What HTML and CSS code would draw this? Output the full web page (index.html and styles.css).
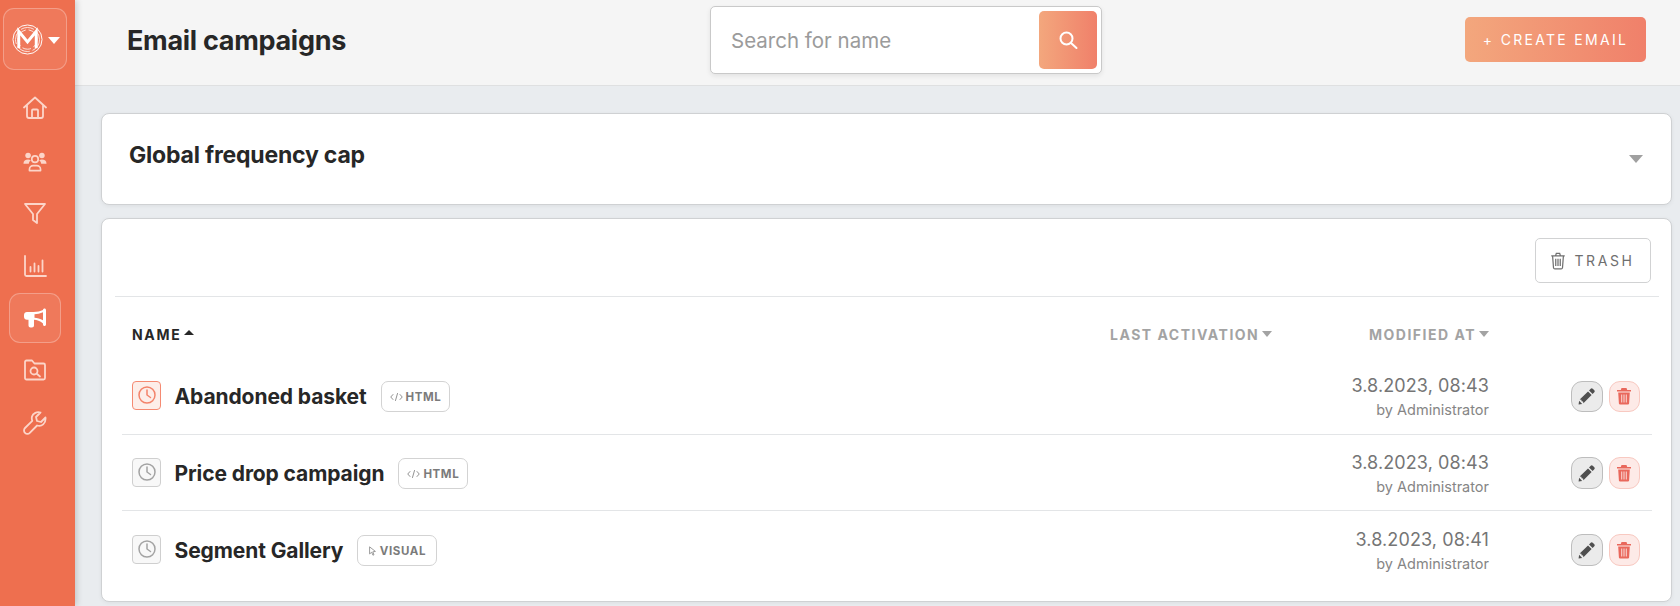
FILE: index.html
```html
<!DOCTYPE html>
<html lang="en">
<head>
<meta charset="utf-8">
<title>Email campaigns</title>
<link rel="stylesheet" href="styles.css">
</head>
<body>
<div class="app">
  <aside class="sidebar">
    <div class="brand">
      <svg class="brand-logo" viewBox="0 0 32 32" fill="none" stroke="#fff">
        <circle cx="16" cy="16" r="15" stroke-width="1"/>
        <circle cx="16" cy="16" r="12.4" stroke-width=".8" stroke-dasharray="14 3"/>
        <circle cx="16" cy="16" r="10" stroke-width=".8" stroke-dasharray="9 3"/>
        <path d="M7 25V7.500L16 18.500 25 7.500V25" stroke-width="3" stroke-linejoin="miter"/>
      </svg>
      <span class="caret caret-white"></span>
    </div>
    <nav class="nav">
      <a class="nav-item"><svg viewBox="0 0 24 24"><path d="M1 11.500 12 1.500l11 10M4 9.500V20a2 2 0 0 0 2 2h12a2 2 0 0 0 2-2V9.500M9 22v-7.500a1 1 0 0 1 1-1h4a1 1 0 0 1 1 1V22"/></svg></a>
      <a class="nav-item"><svg viewBox="0 0 26 24"><circle cx="5.500" cy="6" r="3" class="fill"/><circle cx="20.500" cy="6" r="3" class="fill"/><path class="fill" d="M.5 15c0-3 2-4.500 5-4.500 1.200 0 2 .2 3 .8-1.300 1-2 2.200-2.200 3.700zM25.500 15c0-3-2-4.500-5-4.500-1.200 0-2 .2-3 .8 1.300 1 2 2.200 2.200 3.700z"/><circle cx="13" cy="10" r="3.500"/><path d="M7 22.500v-1.500c0-2.500 2-4 4-4h4c2 0 4 1.500 4 4v1.500z"/></svg></a>
      <a class="nav-item"><svg viewBox="0 0 24 24"><path d="M2 3h20l-8 10v9l-4-3v-6z"/></svg></a>
      <a class="nav-item"><svg viewBox="0 0 24 24"><path d="M2 2v18.500a1.500 1.500 0 0 0 1.500 1.500H23M7.500 13v4.500M11.500 9.500v8M15.500 12v5.500M19.500 6.500v11"/></svg></a>
      <a class="nav-item nav-active"><svg viewBox="0 0 24 24"><path class="solid" d="M21.500 2.500c.8 0 1.500.7 1.500 1.500v14.500c0 .8-.7 1.500-1.500 1.500s-1.500-.7-1.500-1.500v-1C17 15 14 14 11 13.800v5.700c0 1.100-.9 2-2 2H7.500c-1.100 0-2-.9-2-2v-5.800H4c-1.700 0-3-1.300-3-3V9c0-1.700 1.300-3 3-3h6.500C14 6 17.500 5.200 20 4v-.1c.1-.8.700-1.400 1.500-1.400zM11.500 8.200v3.600c2.700.2 5.700 1 8.500 2.400V6.300c-2.800 1.300-5.800 1.800-8.500 1.900z"/></svg></a>
      <a class="nav-item"><svg viewBox="0 0 24 24"><path d="M2 6V4a1.500 1.500 0 0 1 1.500-1.500H9l2.500 3h9A1.500 1.500 0 0 1 22 7v13a1.500 1.500 0 0 1-1.500 1.500h-17A1.500 1.500 0 0 1 2 20z"/><circle cx="11" cy="13" r="3.500"/><path d="m13.500 15.500 3.500 3"/></svg></a>
      <a class="nav-item"><svg viewBox="0 0 24 24"><path d="M22.500 6.500 18 11l-4-1-1-4 4.500-4.500C14 .5 10 2 9 5.500c-.4 1.500-.2 3 .3 4.300L2 17c-1.300 1.300-1.300 3.500 0 4.800s3.500 1.300 4.800 0l7.300-7.300c4.400 1.500 9-1.700 8.400-8z"/></svg></a>
    </nav>
  </aside>

  <main class="main">
    <header class="topbar">
      <h1 class="page-title">Email campaigns</h1>
      <div class="search">
        <span class="search-input">Search for name</span>
        <button class="search-btn" type="button"><svg viewBox="0 0 20 20"><circle cx="8.500" cy="8.500" r="6"/><path d="m13 13 5.500 5"/></svg></button>
      </div>
      <button class="create-btn" type="button">+ CREATE EMAIL</button>
    </header>

    <div class="content">
      <section class="card cap-card">
        <h2 class="cap-title">Global frequency cap</h2>
        <span class="caret caret-grey"></span>
      </section>

      <section class="card list-card">
        <div class="toolbar">
          <button class="trash-btn" type="button">
            <svg viewBox="0 0 14 16"><path d="M1 3.500h12M2.200 3.500 3 14a1.200 1.200 0 0 0 1.200 1h5.600a1.200 1.200 0 0 0 1.200-1l.8-10.500M4.800 3.500 5.500 1.200h3l.7 2.300M5 6v6.500M7 6v6.500M9 6v6.500"/></svg>
            TRASH
          </button>
        </div>

        <div class="thead">
          <span class="th th-name">NAME<span class="caret-up"></span></span>
          <span class="th th-activation">LAST ACTIVATION<span class="caret-down"></span></span>
          <span class="th th-modified">MODIFIED AT<span class="caret-down"></span></span>
        </div>

        <div class="row">
          <span class="status status-on"><svg viewBox="0 0 20 20"><circle cx="10" cy="10" r="8"/><path d="M10 5v5l3.500 2.500"/></svg></span>
          <span class="name">Abandoned basket</span>
          <span class="badge"><svg class="badge-code" viewBox="0 0 14 10"><path d="M3.500 2 .8 5l2.700 3M10.500 2l2.700 3-2.700 3M8.200 .8 5.800 9.200"/></svg>HTML</span>
          <div class="modified"><div class="date">3.8.2023, 08:43</div><div class="by">by Administrator</div></div>
          <div class="actions">
            <button class="act act-edit" type="button"><svg viewBox="0 0 16 16"><path d="M11.300 1.500a1.300 1.300 0 0 1 1.800 0l1.400 1.400a1.300 1.300 0 0 1 0 1.800l-1.500 1.500-3.200-3.200zM8.900 3.900l3.200 3.200-7.300 7.300-.3-1.600-1.300-.2-.2-1.300-1.500-.3zM1 12.300l2.700 2.700-3.200.6z"/></svg></button>
            <button class="act act-del" type="button"><svg viewBox="0 0 16 18"><path d="M1 3h14v1.500H1zM5.500 1h5l.7 2h-6.400zM2.200 5.500h11.600l-.7 11a1.200 1.200 0 0 1-1.200 1.100H4.100a1.200 1.200 0 0 1-1.200-1.100zM5.300 7.500v8h.9v-8zM7.550 7.500v8h.9v-8zM9.800 7.500v8h.9v-8z" fill-rule="evenodd"/></svg></button>
          </div>
        </div>

        <div class="row">
          <span class="status"><svg viewBox="0 0 20 20"><circle cx="10" cy="10" r="8"/><path d="M10 5v5l3.500 2.500"/></svg></span>
          <span class="name">Price drop campaign</span>
          <span class="badge"><svg class="badge-code" viewBox="0 0 14 10"><path d="M3.500 2 .8 5l2.700 3M10.500 2l2.700 3-2.700 3M8.200 .8 5.800 9.200"/></svg>HTML</span>
          <div class="modified"><div class="date">3.8.2023, 08:43</div><div class="by">by Administrator</div></div>
          <div class="actions">
            <button class="act act-edit" type="button"><svg viewBox="0 0 16 16"><path d="M11.300 1.500a1.300 1.300 0 0 1 1.800 0l1.400 1.400a1.300 1.300 0 0 1 0 1.800l-1.500 1.500-3.200-3.200zM8.900 3.900l3.200 3.200-7.300 7.300-.3-1.600-1.300-.2-.2-1.300-1.500-.3zM1 12.300l2.700 2.700-3.200.6z"/></svg></button>
            <button class="act act-del" type="button"><svg viewBox="0 0 16 18"><path d="M1 3h14v1.500H1zM5.500 1h5l.7 2h-6.400zM2.200 5.500h11.600l-.7 11a1.200 1.200 0 0 1-1.200 1.100H4.100a1.200 1.200 0 0 1-1.200-1.100zM5.300 7.500v8h.9v-8zM7.550 7.500v8h.9v-8zM9.800 7.500v8h.9v-8z" fill-rule="evenodd"/></svg></button>
          </div>
        </div>

        <div class="row row-last">
          <span class="status"><svg viewBox="0 0 20 20"><circle cx="10" cy="10" r="8"/><path d="M10 5v5l3.500 2.500"/></svg></span>
          <span class="name">Segment Gallery</span>
          <span class="badge badge-visual"><svg class="badge-cursor" viewBox="0 0 10 12"><path d="M1.500 1 8.500 6.500 5.300 7 6.800 10.500 5.500 11 4 7.500 1.500 9.500z"/></svg>VISUAL</span>
          <div class="modified"><div class="date">3.8.2023, 08:41</div><div class="by">by Administrator</div></div>
          <div class="actions">
            <button class="act act-edit" type="button"><svg viewBox="0 0 16 16"><path d="M11.300 1.500a1.300 1.300 0 0 1 1.800 0l1.400 1.400a1.300 1.300 0 0 1 0 1.800l-1.500 1.500-3.200-3.200zM8.900 3.900l3.200 3.200-7.300 7.300-.3-1.600-1.300-.2-.2-1.300-1.500-.3zM1 12.300l2.700 2.700-3.200.6z"/></svg></button>
            <button class="act act-del" type="button"><svg viewBox="0 0 16 18"><path d="M1 3h14v1.500H1zM5.500 1h5l.7 2h-6.400zM2.200 5.500h11.600l-.7 11a1.200 1.200 0 0 1-1.200 1.100H4.100a1.200 1.200 0 0 1-1.200-1.100zM5.300 7.500v8h.9v-8zM7.550 7.500v8h.9v-8zM9.800 7.500v8h.9v-8z" fill-rule="evenodd"/></svg></button>
          </div>
        </div>
      </section>
    </div>
  </main>
</div>
</body>
</html>
```

FILE: styles.css
```css
* { box-sizing: border-box; }
html, body { margin: 0; height: 100%; }
body {
  font-family: Inter, "Liberation Sans", sans-serif;
  background: #e9ecef;
  color: #272727;
  overflow: hidden;
}
button { font-family: inherit; cursor: pointer; }
h1, h2 { margin: 0; }

.app { display: flex; height: 606px; }

/* Sidebar */
.sidebar {
  width: 75px;
  flex: none;
  background: #ee6f4f;
  box-shadow: 2px 0 6px rgba(0, 0, 0, .16);
  padding: 8px 8px 0 3px;
  position: relative;
  z-index: 1;
}
.brand {
  width: 64px;
  height: 62px;
  border: 1px solid rgba(255, 255, 255, .28);
  border-radius: 11px;
  background: rgba(255, 255, 255, .07);
  display: flex;
  align-items: center;
  padding-left: 8px;
  padding-top: 1px;
}
.brand-logo { width: 31px; height: 31px; flex: none; }
.caret { display: block; width: 0; height: 0; border-style: solid; border-color: transparent; }
.caret-white { border-width: 7px 6px 0; border-top-color: #fff; margin-left: 5px; margin-top: 1px; }

.nav { display: flex; flex-direction: column; align-items: center; margin: 12px 0 0 6px; width: 52px; }
.nav-item {
  width: 52px;
  height: 52.500px;
  display: flex;
  align-items: center;
  justify-content: center;
}
.nav-item svg {
  width: 24px;
  height: 24px;
  fill: none;
  stroke: #fcd5c9;
  stroke-width: 1.800;
  stroke-linecap: round;
  stroke-linejoin: round;
}
.nav-item .fill { fill: #fcd5c9; stroke: none; }
.nav-item .solid { fill: #fff; stroke: none; }
.nav-active {
  height: 50px;
  margin: 1px 0;
  border: 1px solid rgba(255, 255, 255, .28);
  border-radius: 11px;
  background: rgba(255, 255, 255, .07);
}

/* Main */
.main { flex: 1; min-width: 0; display: flex; flex-direction: column; }
.topbar {
  height: 86px;
  flex: none;
  background: #f5f5f5;
  border-bottom: 1px solid #dfe0e1;
  display: grid;
  grid-template-columns: 582px 393px 1fr;
  align-items: start;
  padding: 0 34px 0 52px;
}
.page-title {
  font-size: 27px;
  font-weight: 700;
  line-height: 34px;
  letter-spacing: -.3px;
  margin-top: 24px;
  color: #272727;
}
.search {
  height: 68px;
  margin: 6px 0 0 1px;
  background: #fff;
  border: 1px solid #c9c9c9;
  border-radius: 5px;
  box-shadow: 0 2px 5px rgba(0, 0, 0, .08);
  display: flex;
  align-items: center;
  justify-content: space-between;
  padding: 0 4px 0 20px;
}
.search-input { font-size: 20.500px; color: #9b9b9b; }
.search-btn {
  width: 58px;
  height: 58px;
  border: 0;
  border-radius: 5px;
  background: linear-gradient(90deg, #f3a77d, #f0806a);
  display: flex;
  align-items: center;
  justify-content: center;
  padding: 0;
}
.search-btn svg { width: 20px; height: 20px; fill: none; stroke: #fff; stroke-width: 2; stroke-linecap: round; }
.create-btn {
  justify-self: end;
  width: 181px;
  height: 45px;
  margin-top: 17px;
  border: 0;
  border-radius: 5px;
  background: linear-gradient(90deg, #f3a77d, #f0806a);
  color: #fff;
  font-size: 14px;
  font-weight: 400;
  letter-spacing: 2.300px;
  padding: 0;
}

.content {
  flex: 1;
  padding: 27px 8px 0 26px;
  display: flex;
  flex-direction: column;
  gap: 13px;
}
.card {
  background: #fff;
  border: 1px solid #cfd1d3;
  border-radius: 8px;
  box-shadow: 0 1px 4px rgba(0, 0, 0, .06);
}

.cap-card {
  height: 92px;
  display: flex;
  justify-content: space-between;
  padding: 25px 28px 0 27px;
}
.cap-title { font-size: 23px; font-weight: 700; line-height: 32px; letter-spacing: -.2px; color: #272727; }
.caret-grey { border-width: 8px 7px 0; border-top-color: #a0a0a0; margin-top: 16px; }

.list-card { height: 384px; padding: 19px 0 0 13px; }
.toolbar {
  width: 1544px;
  height: 59px;
  border-bottom: 1px solid #e3e5e7;
  display: flex;
  justify-content: flex-end;
  padding-right: 8px;
}
.trash-btn {
  width: 116px;
  height: 45px;
  background: #fff;
  border: 1px solid #d1d2d3;
  border-radius: 5px;
  color: #6f6f6f;
  font-size: 14px;
  letter-spacing: 2.600px;
  display: flex;
  align-items: center;
  justify-content: center;
  gap: 8px;
  padding: 0 1px 0 0;
}
.trash-btn svg { width: 16px; height: 18px; fill: none; stroke: #6f6f6f; stroke-width: 1.100; }

.thead {
  height: 61px;
  width: 1536px;
  margin-left: 7px;
  display: flex;
  align-items: center;
  padding: 13px 0 0 10px;
  font-size: 14px;
  font-weight: 700;
  letter-spacing: 1.500px;
  color: #a3a3a3;
}
.th { display: flex; align-items: center; white-space: nowrap; }
.th-name { color: #272727; width: 978px; letter-spacing: 1.700px; }
.th-activation { width: 259px; }
.caret-up, .caret-down { display: block; width: 0; height: 0; border-style: solid; border-color: transparent; margin-left: 3px; }
.caret-up { border-width: 0 5px 5px; border-bottom-color: #272727; margin-bottom: 3px; }
.caret-down { border-width: 6px 5.500px 0; border-top-color: #a3a3a3; }

.row {
  width: 1530px;
  height: 76.700px;
  margin-left: 7px;
  border-bottom: 1px solid #e3e5e7;
  display: flex;
  align-items: center;
  padding: 4px 12px 0 10px;
}
.row-last { border-bottom: 0; }
.status {
  width: 29px;
  height: 29px;
  flex: none;
  border: 1px solid #cfcfcf;
  background: #f8f8f8;
  border-radius: 4px;
  display: flex;
  align-items: center;
  justify-content: center;
  margin-bottom: 5px;
}
.status svg { width: 20px; height: 20px; fill: none; stroke: #a3a3a3; stroke-width: 1.500; stroke-linecap: round; stroke-linejoin: round; }
.status-on { border-color: #f58a72; background: #fdeee9; }
.status-on svg { stroke: #f3836a; }
.name { font-size: 21px; font-weight: 700; color: #272727; margin-left: 13.500px; letter-spacing: -.1px; white-space: nowrap; position: relative; top: -1.500px; }
.badge {
  height: 31px;
  border: 1px solid #d3d3d3;
  border-radius: 7px;
  margin-left: 14px;
  padding: 0 8px;
  display: flex;
  align-items: center;
  gap: 3px;
  font-size: 11.500px;
  font-weight: 700;
  letter-spacing: .6px;
  color: #7b7b7b;
  margin-bottom: 2px;
}
.badge-visual { padding: 0 9.500px; }
.badge svg { fill: none; stroke: #7b7b7b; stroke-width: .9; }
.badge-code { width: 13px; height: 10px; }
.badge-cursor { width: 9px; height: 10px; }

.modified { margin-left: auto; margin-right: 82px; text-align: right; }
.date { font-size: 18px; line-height: 22px; color: #757575; letter-spacing: .1px; }
.by { font-size: 14.500px; line-height: 22px; margin-top: 2px; color: #858585; }

.actions { display: flex; gap: 6px; margin-bottom: 3px; }
.act {
  width: 31.500px;
  height: 31.500px;
  border-radius: 11px;
  display: flex;
  align-items: center;
  justify-content: center;
  padding: 0;
}
.act-edit { background: #ebebeb; border: 1.500px solid #bdbdbd; }
.act-edit svg { width: 18px; height: 18px; fill: #4f4f4f; }
.act-del { background: #fdeae7; border: 1.500px solid #f8c9c1; }
.act-del svg { width: 16px; height: 18px; fill: #e9685c; }
```
